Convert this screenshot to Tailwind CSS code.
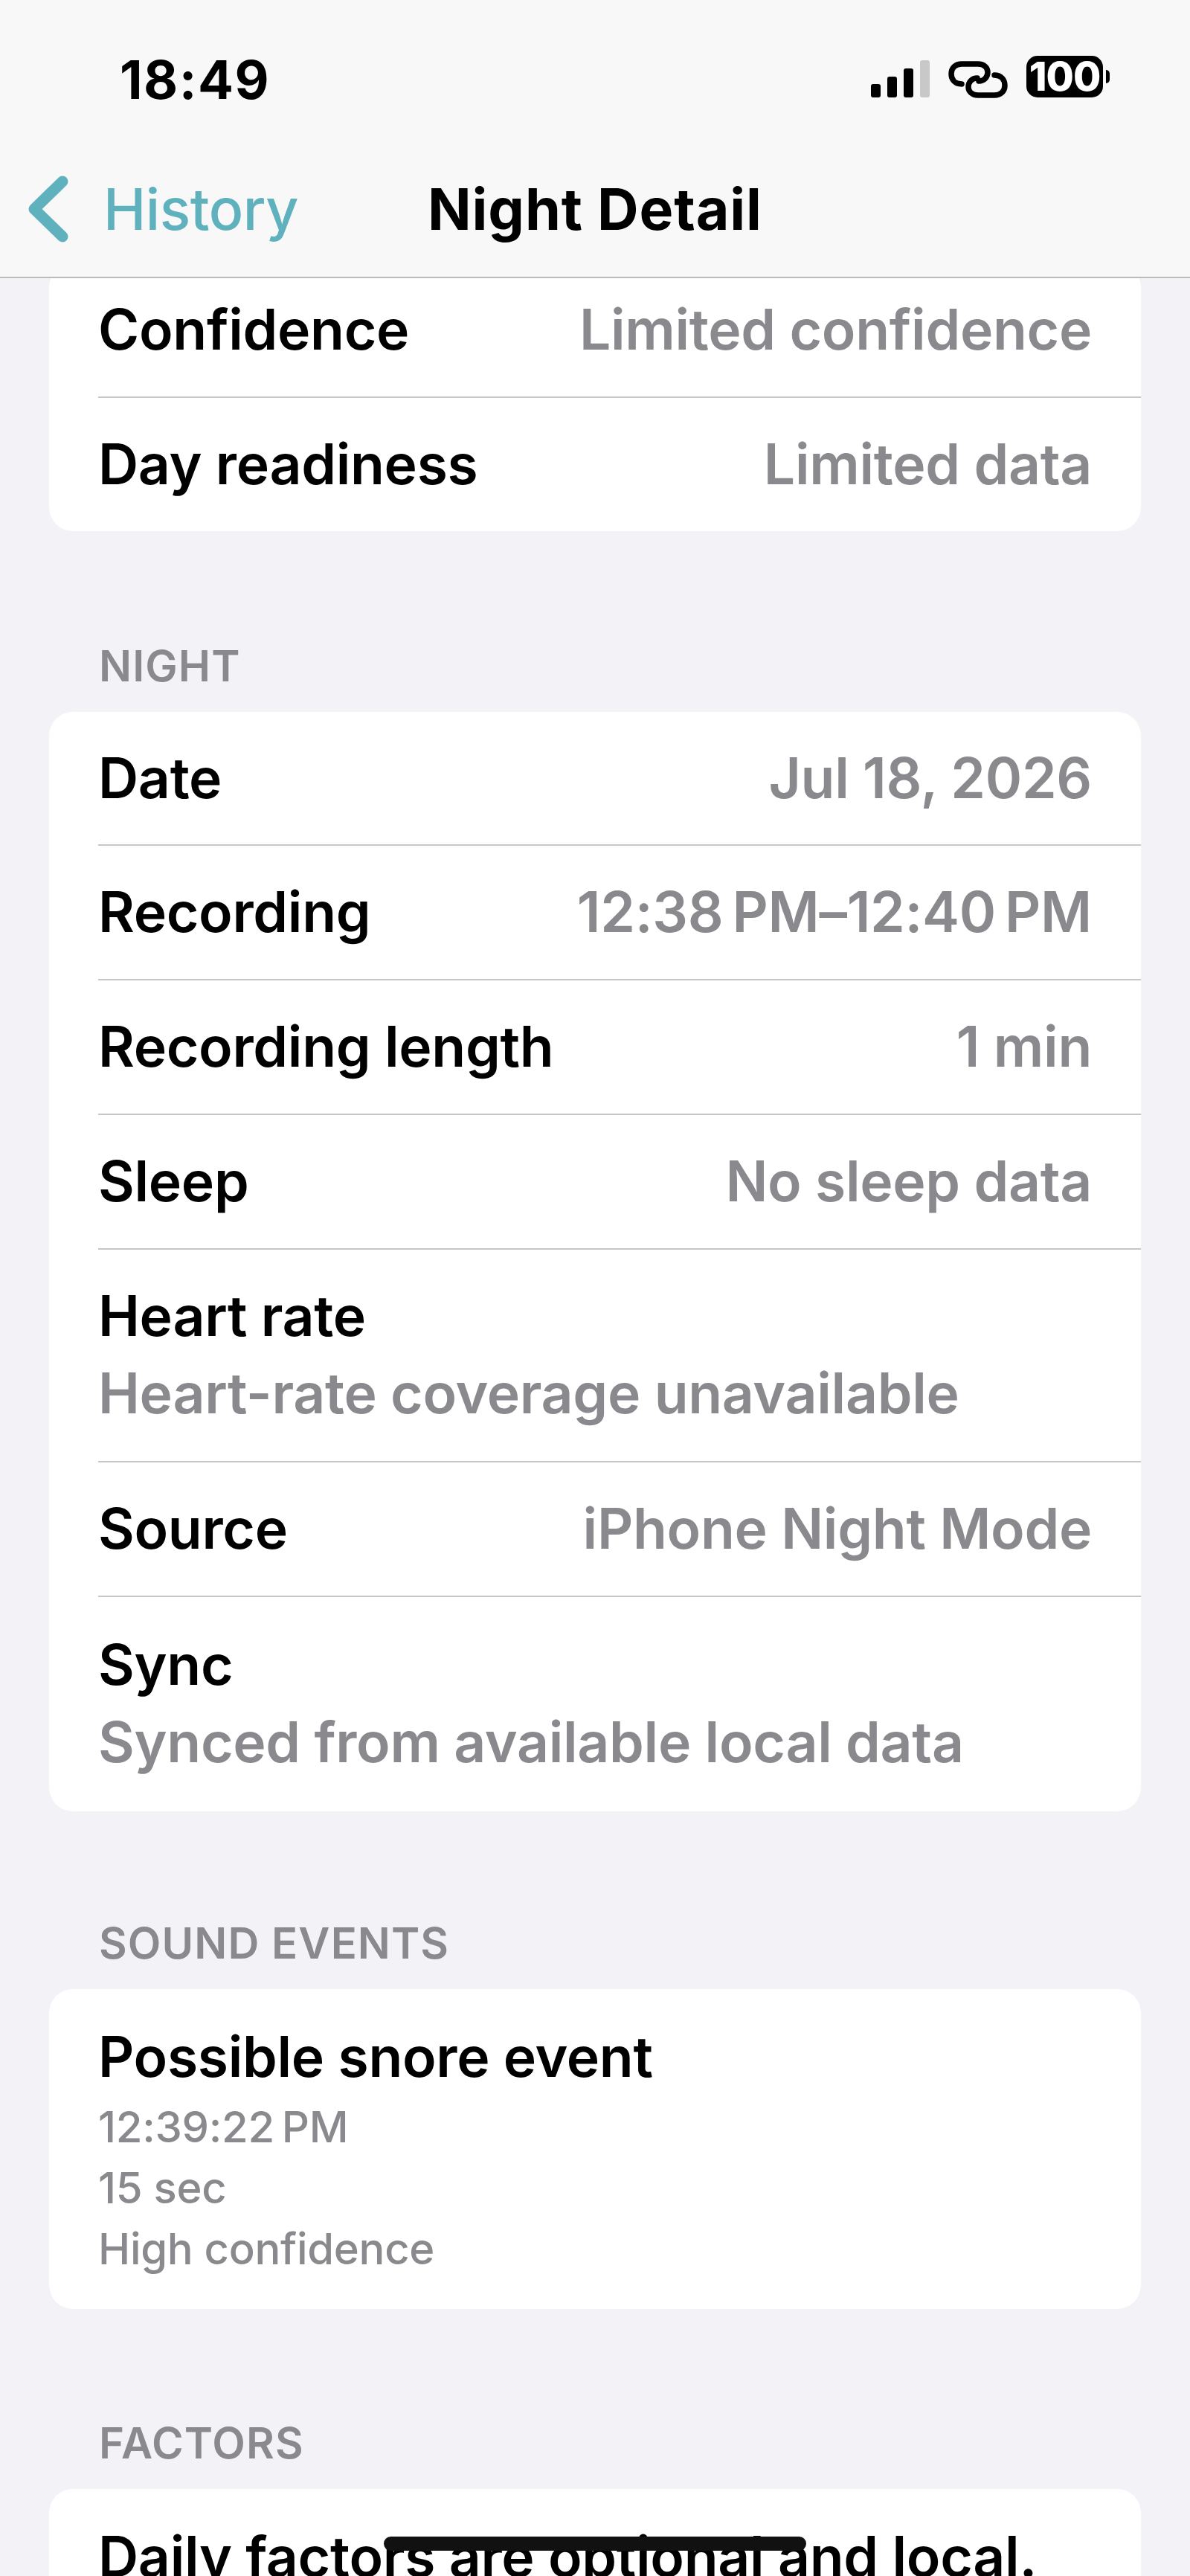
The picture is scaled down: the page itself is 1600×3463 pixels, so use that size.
<!DOCTYPE html>
<html lang="en">
<head>
  <meta charset="UTF-8" />
  <title>Night Detail</title>
  <script src="https://cdn.jsdelivr.net/npm/@tailwindcss/browser@4"></script>
</head>
<body class="relative h-[3463px] w-[1600px] overflow-hidden bg-[#f2f2f7] font-['Inter',sans-serif] text-black">

  <!-- nav bar sits over the scrolled list -->
  <header class="absolute inset-x-0 top-0 z-10 h-[374px] border-b-2 border-[#bcbcbc] bg-[#f8f8f9]">
    <div class="flex h-[216px] items-start justify-between pl-[161px] pr-[108px] pt-[72px]">
      <span class="text-[71px] leading-[70px] font-bold tracking-[1.5px]">18:49</span>
      <div class="flex items-start pt-[6px]">
        <div class="mt-[3px] flex h-[50px] items-end gap-[9px]">
          <span class="h-[18px] w-[13px] rounded-[3px] bg-black"></span>
          <span class="h-[28px] w-[13px] rounded-[3px] bg-black"></span>
          <span class="h-[39px] w-[13px] rounded-[3px] bg-black"></span>
          <span class="h-[50px] w-[13px] rounded-[3px] bg-[#c8c8c8]"></span>
        </div>
        <svg class="ml-[25px] mt-[4px]" width="80" height="50" viewBox="0 0 80 50" fill="none" stroke="black" stroke-width="7.5" stroke-linecap="round">
          <path d="M18 31C9 31 4 25 4 17C4 9 10 4 18 4H40C48 4 53 9 53 15C53 22 48 27 41 27"/>
          <path d="M62 19C71 19 76 25 76 33C76 41 70 46 62 46H40C32 46 27 41 27 35C27 28 32 23 39 23"/>
        </svg>
        <div class="ml-[25px] -mt-[3px] flex items-center">
          <span class="flex h-[56px] w-[103px] items-center justify-center rounded-[15px] bg-black text-[54px] leading-none font-extrabold tracking-[-1px] text-white">100</span>
          <span class="ml-[4px] h-[18px] w-[5px] rounded-r-full bg-black"></span>
        </div>
      </div>
    </div>
    <div class="relative flex h-[156px] items-start pt-[19px]">
      <svg class="ml-[36px]" width="60" height="92" viewBox="0 0 60 92" fill="none" stroke="#5fb1bd" stroke-width="15" stroke-linecap="round" stroke-linejoin="round">
        <path d="M48 9L10 46L48 83"/>
      </svg>
      <a href="#" class="ml-[43px] mt-[2px] text-[77px] leading-[88px] font-medium tracking-[-0.5px] text-[#5fb1bd]">History</a>
      <h1 class="absolute left-[575px] top-[21px] text-[77px] leading-[88px] font-bold tracking-[0.9px]">Night Detail</h1>
    </div>
  </header>

  <main class="pt-[354px]">
    <section class="mx-[66px] rounded-[32px] bg-white pl-[66px] text-[75px] font-[570] tracking-[-0.3px]">
      <div class="flex h-[181px] items-center justify-between border-b-2 border-[#c6c6c8] pr-[66px]">
        <span>Confidence</span><span class="text-[#8a8a8e]">Limited confidence</span>
      </div>
      <div class="flex h-[179px] items-center justify-between pr-[66px]">
        <span>Day readiness</span><span class="text-[#8a8a8e]">Limited data</span>
      </div>
    </section>

    <h2 class="ml-[133px] mt-[145px] mb-[26px] text-[58px] leading-[72px] font-semibold tracking-[1.1px] text-[#8a8a8e]">NIGHT</h2>
    <section class="mx-[66px] rounded-[32px] bg-white pl-[66px] text-[75px] font-[570] tracking-[-0.3px]">
      <div class="flex h-[180px] items-center justify-between border-b-2 border-[#c6c6c8] pr-[66px]">
        <span>Date</span><span class="text-[#8a8a8e]">Jul 18, 2026</span>
      </div>
      <div class="flex h-[181px] items-center justify-between border-b-2 border-[#c6c6c8] pr-[66px]">
        <span>Recording</span><span class="text-[#8a8a8e]">12:38&#8239;PM–12:40&#8239;PM</span>
      </div>
      <div class="flex h-[181px] items-center justify-between border-b-2 border-[#c6c6c8] pr-[66px]">
        <span>Recording length</span><span class="text-[#8a8a8e]">1 min</span>
      </div>
      <div class="flex h-[181px] items-center justify-between border-b-2 border-[#c6c6c8] pr-[66px]">
        <span>Sleep</span><span class="text-[#8a8a8e]">No sleep data</span>
      </div>
      <div class="flex h-[286px] flex-col justify-center border-b-2 border-[#c6c6c8] pb-[3px] pr-[66px] leading-[104px]">
        <span>Heart rate</span><span class="text-[#8a8a8e]">Heart-rate coverage unavailable</span>
      </div>
      <div class="flex h-[181px] items-center justify-between border-b-2 border-[#c6c6c8] pr-[66px]">
        <span>Source</span><span class="text-[#8a8a8e]">iPhone Night Mode</span>
      </div>
      <div class="flex h-[288px] flex-col justify-center pb-[3px] pr-[66px] leading-[104px]">
        <span>Sync</span><span class="text-[#8a8a8e]">Synced from available local data</span>
      </div>
    </section>

    <h2 class="ml-[133px] mt-[141px] mb-[26px] text-[58px] leading-[72px] font-semibold tracking-[1.1px] text-[#8a8a8e]">SOUND EVENTS</h2>
    <section class="mx-[66px] h-[430px] rounded-[32px] bg-white px-[66px] pt-[46px]">
      <p class="text-[75px] leading-[90px] font-[570] tracking-[-0.3px]">Possible snore event</p>
      <div class="mt-[8px] text-[58px] leading-[82px] font-medium tracking-[-0.3px] text-[#8a8a8e]">
        <p>12:39:22&#8239;PM</p>
        <p>15 sec</p>
        <p>High confidence</p>
      </div>
    </section>

    <h2 class="ml-[133px] mt-[144px] mb-[26px] text-[58px] leading-[72px] font-semibold tracking-[1.1px] text-[#8a8a8e]">FACTORS</h2>
    <section class="mx-[66px] rounded-t-[32px] bg-white pl-[66px] pt-[46px]">
      <p class="text-[75px] leading-[90px] font-[570] tracking-[-0.3px]">Daily factors are optional and local.</p>
    </section>
  </main>

  <!-- home indicator -->
  <div class="absolute left-[516px] top-[3410px] h-[19px] w-[568px] rounded-full bg-[#111]"></div>
</body>
</html>
